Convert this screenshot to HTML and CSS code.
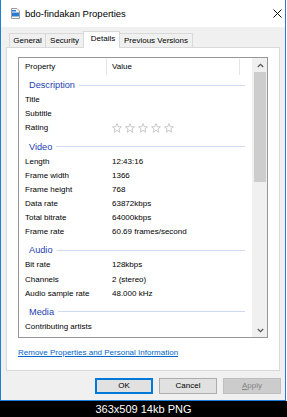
FILE: index.html
```html
<!DOCTYPE html>
<html>
<head>
<meta charset="utf-8">
<link rel="stylesheet" href="styles.css">
</head>
<body>
<div class="window">
  <div class="titlebar">
    <svg class="ticon" width="9" height="11" viewBox="0 0 9 11">
      <path d="M0.5 0.5 H6 L8.5 3 V10.5 H0.5 Z" fill="#fff" stroke="#9a9a9a" stroke-width="1"/>
      <rect x="1" y="4.5" width="7" height="4" fill="#2b7cd3"/>
      <rect x="1" y="2" width="4" height="1.5" fill="#2b7cd3"/>
    </svg>
    <span class="ttext">bdo-findakan Properties</span>
    <svg class="close" width="9" height="9" viewBox="0 0 9 9">
      <path d="M0.5 0.5 L8.5 8.5 M8.5 0.5 L0.5 8.5" stroke="#111" stroke-width="1"/>
    </svg>
  </div>
  <div class="tabs">
    <div class="tab t-general">General</div>
    <div class="tab t-security">Security</div>
    <div class="tab t-details sel">Details</div>
    <div class="tab t-prev">Previous Versions</div>
  </div>
  <div class="panel">
    <div class="list">
      <div class="main">
        <div class="hdr">
          <div class="hc hc1">Property</div>
          <div class="hc hc2">Value</div>
        </div>
        <div class="grp first"><span>Description</span><i></i></div>
        <div class="row"><span class="k">Title</span><span class="v"></span></div>
        <div class="row"><span class="k">Subtitle</span><span class="v"></span></div>
        <div class="row"><span class="k">Rating</span><span class="v stars">
          <svg width="10" height="10" viewBox="0 0 10 10"><polygon points="5,0.6 6.2,3.7 9.5,3.8 6.9,5.9 7.8,9.3 5,7.3 2.2,9.3 3.1,5.9 0.5,3.8 3.8,3.7"/></svg>
          <svg width="10" height="10" viewBox="0 0 10 10"><polygon points="5,0.6 6.2,3.7 9.5,3.8 6.9,5.9 7.8,9.3 5,7.3 2.2,9.3 3.1,5.9 0.5,3.8 3.8,3.7"/></svg>
          <svg width="10" height="10" viewBox="0 0 10 10"><polygon points="5,0.6 6.2,3.7 9.5,3.8 6.9,5.9 7.8,9.3 5,7.3 2.2,9.3 3.1,5.9 0.5,3.8 3.8,3.7"/></svg>
          <svg width="10" height="10" viewBox="0 0 10 10"><polygon points="5,0.6 6.2,3.7 9.5,3.8 6.9,5.9 7.8,9.3 5,7.3 2.2,9.3 3.1,5.9 0.5,3.8 3.8,3.7"/></svg>
          <svg width="10" height="10" viewBox="0 0 10 10"><polygon points="5,0.6 6.2,3.7 9.5,3.8 6.9,5.9 7.8,9.3 5,7.3 2.2,9.3 3.1,5.9 0.5,3.8 3.8,3.7"/></svg>
        </span></div>
        <div class="grp"><span>Video</span><i></i></div>
        <div class="row"><span class="k">Length</span><span class="v">12:43:16</span></div>
        <div class="row"><span class="k">Frame width</span><span class="v">1366</span></div>
        <div class="row"><span class="k">Frame height</span><span class="v">768</span></div>
        <div class="row"><span class="k">Data rate</span><span class="v">63872kbps</span></div>
        <div class="row"><span class="k">Total bitrate</span><span class="v">64000kbps</span></div>
        <div class="row"><span class="k">Frame rate</span><span class="v">60.69 frames/second</span></div>
        <div class="grp"><span>Audio</span><i></i></div>
        <div class="row"><span class="k">Bit rate</span><span class="v">128kbps</span></div>
        <div class="row"><span class="k">Channels</span><span class="v">2 (stereo)</span></div>
        <div class="row"><span class="k">Audio sample rate</span><span class="v">48.000 kHz</span></div>
        <div class="grp"><span>Media</span><i></i></div>
        <div class="row"><span class="k">Contributing artists</span><span class="v"></span></div>
      </div>
      <div class="scroll">
        <div class="arrow"><svg width="7" height="5" viewBox="0 0 7 5"><path d="M0.8 4 L3.5 1.3 L6.2 4" fill="none" stroke="#555" stroke-width="1.2"/></svg></div>
        <div class="thumb"></div>
        <div class="track"></div>
        <div class="arrow"><svg width="7" height="5" viewBox="0 0 7 5"><path d="M0.8 1 L3.5 3.7 L6.2 1" fill="none" stroke="#555" stroke-width="1.2"/></svg></div>
      </div>
    </div>
    <a class="link" href="#">Remove Properties and Personal Information</a>
  </div>
  <div class="buttons">
    <div class="btn ok">OK</div>
    <div class="btn">Cancel</div>
    <div class="btn dis"><u>A</u>pply</div>
  </div>
</div>
<div class="caption">363x509 14kb PNG</div>
</body>
</html>
```
FILE: styles.css
```css
* { box-sizing: border-box; }
body {
  margin: 0;
  width: 287px;
  height: 417px;
  overflow: hidden;
  background: #fff;
  font-family: "Liberation Sans", Arial, sans-serif;
  font-size: 8px;
  color: #000;
}
.window {
  width: 286px;
  height: 401px;
  border: 1px solid #1e7fd8;
  border-top: none;
  background: #f0f0f0;
  display: flex;
  flex-direction: column;
}
.titlebar {
  flex: none;
  height: 27px;
  background: #fff;
  display: flex;
  align-items: center;
  padding-left: 10px;
}
.ticon { flex: none; margin-right: 5px; }
.ttext { font-size: 9.5px; color: #000; }
.close { margin-left: auto; margin-right: 3px; }
.tabs {
  flex: none;
  height: 20px;
  display: flex;
  align-items: flex-end;
  padding-left: 8px;
}
.tab {
  height: 14px;
  line-height: 13px;
  border: 1px solid #d9d9d9;
  border-bottom: none;
  background: #f0f0f0;
  text-align: center;
  white-space: nowrap;
}
.t-general { width: 37px; }
.t-security { width: 39px; margin-left: -1px; }
.t-details { width: 37px; margin-left: -1px; }
.t-prev { width: 74px; margin-left: -1px; }
.tab.sel {
  height: 17px;
  line-height: 14px;
  background: #fff;
  margin-bottom: -1px;
  position: relative;
  z-index: 1;
  padding-left: 3px;
}
.panel {
  flex: none;
  height: 324px;
  margin: 0 5px;
  border: 1px solid #d9d9d9;
  background: #fff;
  padding: 9px 11px 0 11px;
}
.list {
  height: 281px;
  border: 1px solid #979797;
  display: flex;
}
.main { flex: 1; }
.hdr { display: flex; height: 19px; }
.hc1 { width: 88px; padding-left: 6px; border-right: 1px solid #e5e5e5; margin: 1px 0 2px; line-height: 16px; }
.hc2 { width: 133px; padding-left: 5px; border-right: 1px solid #e5e5e5; margin: 1px 0 2px; line-height: 16px; }
.grp {
  display: flex;
  align-items: center;
  height: 16.2px;
  margin-top: 3px;
  padding: 0 7px 0 10px;
  gap: 4px;
  color: #2541b2;
  font-size: 9.2px;
}
.grp.first { margin-top: 0; }
.grp i { flex: 1; height: 1px; background: #cfdaf0; }
.row { display: flex; height: 14.1px; line-height: 14.1px; }
.k { width: 93px; padding-left: 6px; flex: none; white-space: nowrap; }
.v { white-space: nowrap; }
.stars { display: flex; align-items: center; gap: 3px; height: 14.1px; }
.stars svg { display: block; }
.stars polygon { fill: none; stroke: #bdbdbd; stroke-width: 0.8; }
.scroll {
  width: 15px;
  flex: none;
  background: #f0f0f0;
  display: flex;
  flex-direction: column;
}
.arrow {
  height: 14px;
  display: flex;
  align-items: center;
  justify-content: center;
  padding-left: 1px;
}
.arrow svg { display: block; }
.thumb {
  height: 110px;
  margin: 0 1px 0 2px;
  background: #cdcdcd;
}
.track { flex: 1; }
.link {
  display: block;
  margin-top: 9px;
  line-height: 12px;
  color: #0066cc;
  text-decoration: underline;
  white-space: nowrap;
}
.buttons {
  flex: none;
  display: flex;
  justify-content: flex-end;
  gap: 6px;
  margin-top: 7px;
  padding-right: 4px;
}
.btn {
  width: 58px;
  height: 16px;
  line-height: 14px;
  text-align: center;
  background: #e1e1e1;
  border: 1px solid #adadad;
}
.btn.ok {
  border-color: #0078d7;
  box-shadow: inset 0 0 0 1px #0078d7;
}
.btn.dis {
  background: #cccccc;
  border-color: #bfbfbf;
  color: #838383;
}
.caption {
  height: 16px;
  background: #000;
  color: #fff;
  font-size: 11px;
  line-height: 16px;
  text-align: center;
}
```
